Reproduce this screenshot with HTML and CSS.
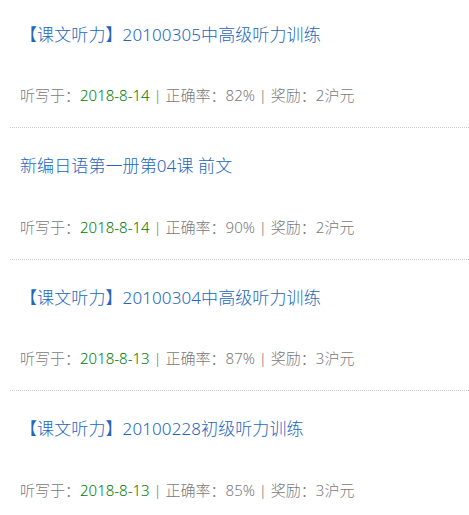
FILE: index.html
```html
<!DOCTYPE html>
<html lang="zh-CN">
<head>
<meta charset="utf-8">
<title>听写记录</title>
<link rel="stylesheet" href="styles.css">
</head>
<body>
<ul class="list">
  <li class="item">
    <a class="title" href="#">【课文听力】20100305中高级听力训练</a>
    <p class="meta">听写于：<span class="date">2018-8-14</span> | 正确率：82% | 奖励：2沪元</p>
  </li>
  <li class="item">
    <a class="title" href="#">新编日语第一册第04课 前文</a>
    <p class="meta">听写于：<span class="date">2018-8-14</span> | 正确率：90% | 奖励：2沪元</p>
  </li>
  <li class="item">
    <a class="title" href="#">【课文听力】20100304中高级听力训练</a>
    <p class="meta">听写于：<span class="date">2018-8-13</span> | 正确率：87% | 奖励：3沪元</p>
  </li>
  <li class="item">
    <a class="title" href="#">【课文听力】20100228初级听力训练</a>
    <p class="meta">听写于：<span class="date">2018-8-13</span> | 正确率：85% | 奖励：3沪元</p>
  </li>
</ul>
</body>
</html>
```

FILE: styles.css
```css
html, body {
  margin: 0;
  padding: 0;
  background: #fff;
}
body {
  font-family: "Noto Sans", "Noto Sans CJK SC", sans-serif;
  font-weight: 300;
}
.list {
  list-style: none;
  margin: -3.5px 0 0 10px;
  padding: 0;
}
.item {
  padding: 26px 0 20px 10px;
  border-bottom: 1px dotted #ccc;
}
.title {
  display: block;
  font-size: 17px;
  line-height: 24px;
  color: #2566bd;
  text-decoration: none;
  letter-spacing: 0.1px;
}
.meta {
  margin: 36.5px 0 0;
  font-size: 15px;
  line-height: 24px;
  color: #7a7a7a;
}
.date {
  color: #007a00;
}
```
